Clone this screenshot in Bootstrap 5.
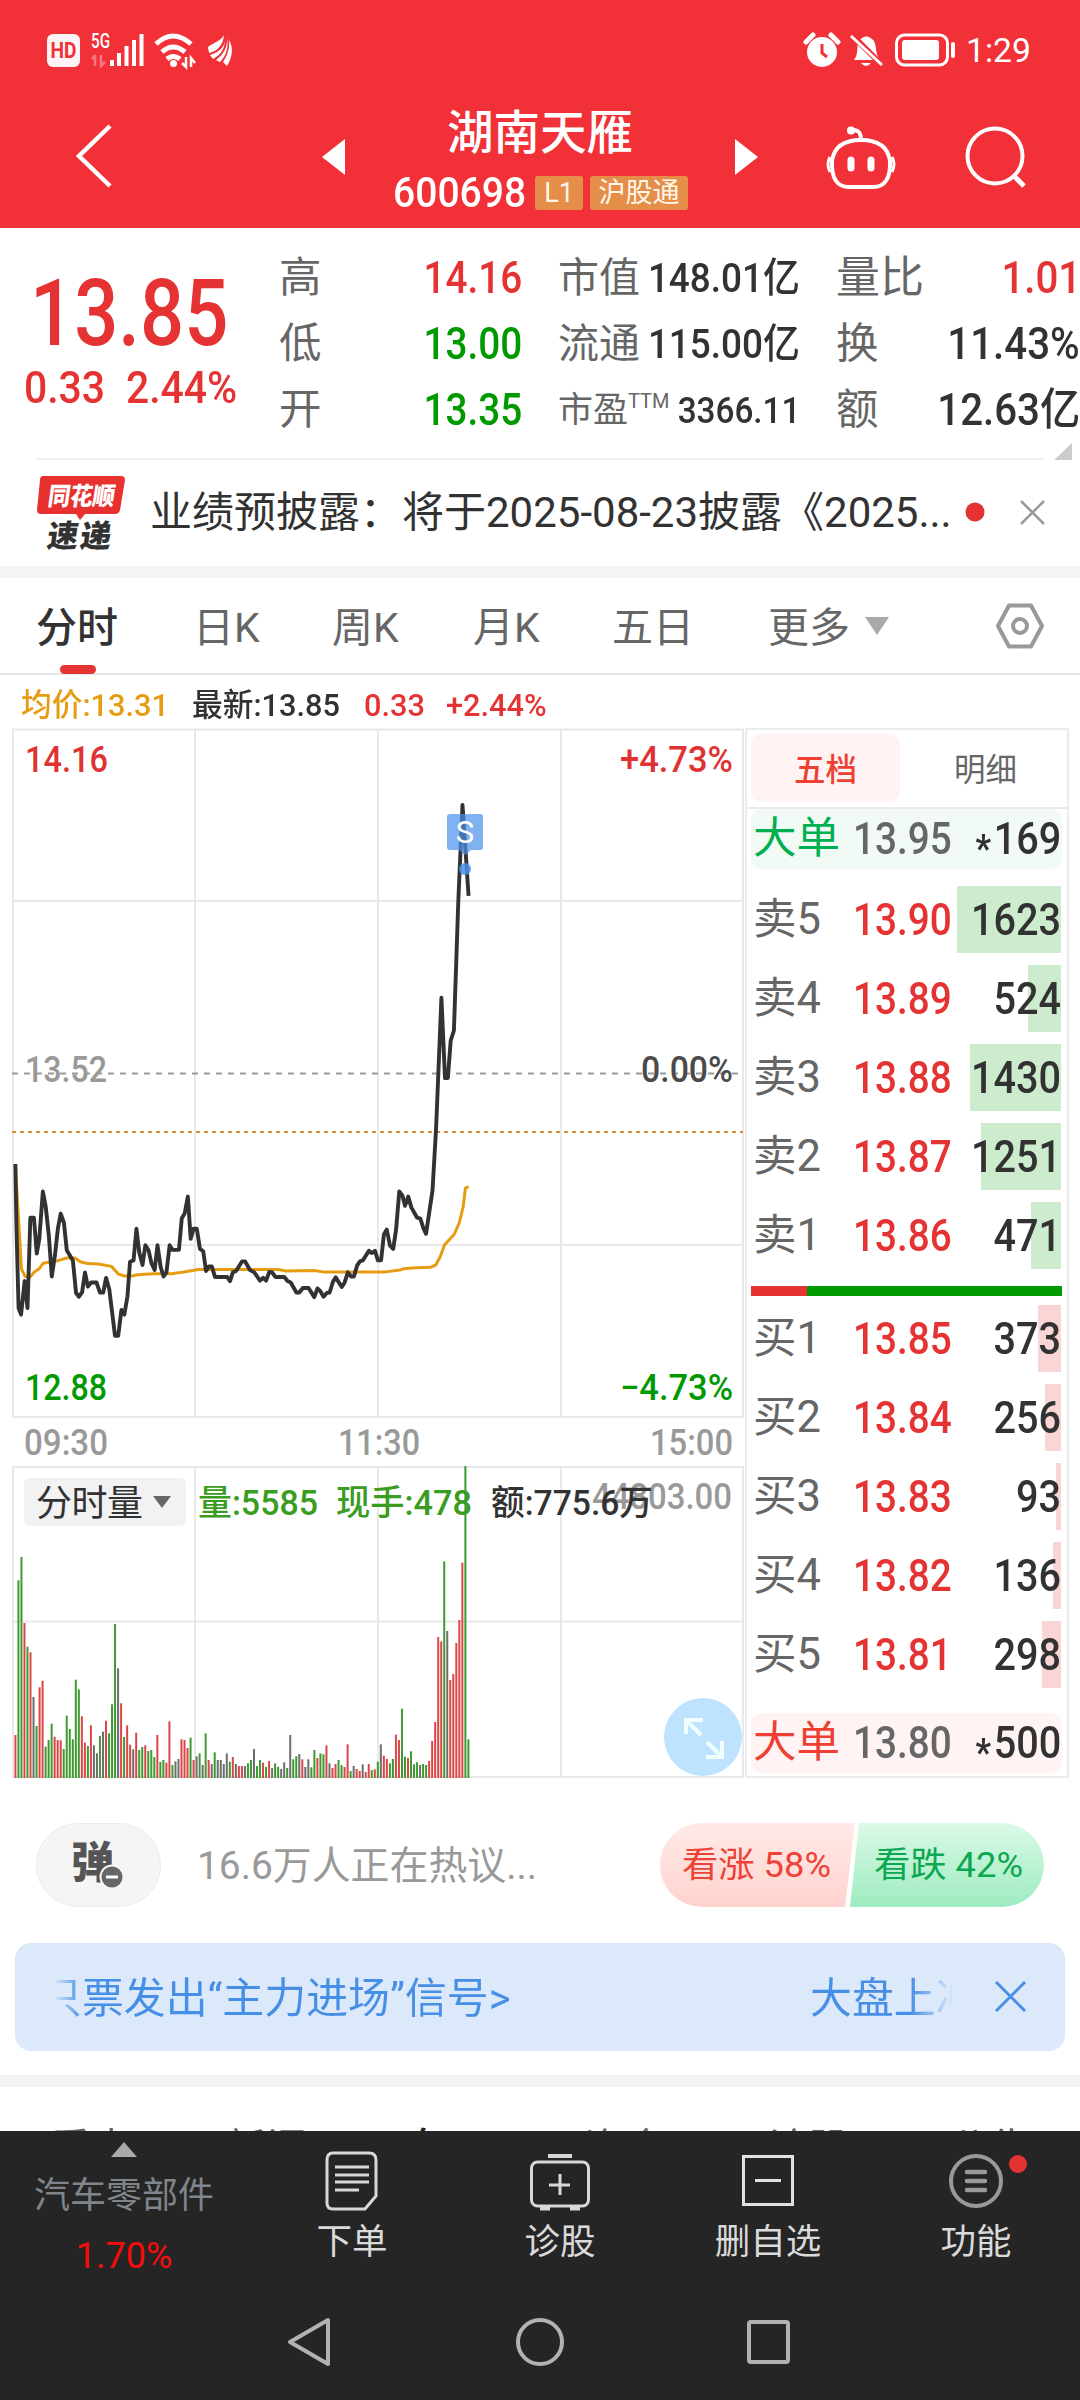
<!DOCTYPE html>
<html lang="zh-CN">
<head>
<meta charset="utf-8">
<meta name="viewport" content="width=device-width, initial-scale=1">
<title>湖南天雁 600698</title>
<link href="https://cdn.jsdelivr.net/npm/bootstrap@5.3.0/dist/css/bootstrap.min.css" rel="stylesheet">
<style>
:root{--up:#e53232;--down:#090;--ink:#323232;--sub:#666;--line:#ebebeb}
html,body{width:1080px;height:2400px;overflow:hidden}
body{font-family:Roboto,"Noto Sans CJK SC",sans-serif;background:#fff;color:var(--ink);font-size:41px;line-height:1}
svg{display:block;flex:none}
svg text{font-family:Roboto,"Noto Sans CJK SC",sans-serif;font-weight:500}
.c-up{color:var(--up)}.c-down{color:var(--down)}.c-sub{color:var(--sub)}
.fw-5{font-weight:500}
.numx{display:inline-block;white-space:nowrap;font-weight:500;transform:scaleX(.9);transform-origin:left}
.numr{transform-origin:right}
.topbar{background:#f13037;height:228px;color:#fff}
.statusrow{height:100px;padding:0 49px 0 47px}
.titlegrid{display:grid;grid-template-columns:322px 23px 390px 23px 68px 70px 68px 110px;height:112px;align-items:center}
.stockname{font-size:46.5px;line-height:58px;font-weight:500;margin:4px 0 10px}
.code{font-size:42px;width:130px;transform:scaleX(.93)}
.tagx{background:#e48e49;color:#fff7e8;font-size:27px;height:34px;line-height:34px;border-radius:3px;text-align:center}
.quote{height:230px;display:grid;grid-template-columns:281px 279px 278px 242px}
.bigprice{font-size:92px;height:91px;line-height:82px;transform:scaleX(.845)}
.chg{font-size:43.5px;height:50px;line-height:50px;transform:scaleX(.94)}
.qcell{height:66px;display:flex;justify-content:space-between;align-items:center;white-space:nowrap}
.qcell .lab{color:var(--sub);font-size:42.5px;margin-left:-2px}
.qcell .numx{font-size:44px;transform:scaleX(.88)}
.m .lab{font-size:41px}.m .numx{font-size:41px;margin-left:-20px;transform:scaleX(.9)}
.q4 .numx{transform:scaleX(.915)}
.corner{border-style:solid;border-width:0 0 17px 18px;border-color:transparent transparent #ccc}
.rule{height:2px;background:#eee;margin:0 36px}
.news{height:106px;padding-left:37px}
.news .txt{width:801px;font-size:42px;white-space:nowrap;margin-left:-1px}
.flag{fill:#e8302f}
.band{height:12px;background:#f4f4f4}
.ktabs{height:97px;border-bottom:2px solid #e6e6e6;display:grid;grid-template-columns:36px 157px 139px 141px 139px 156px 97px 131px 48px;color:var(--sub);white-space:nowrap;align-items:center}
.ktabs>span{padding-top:5px}
.ktabs .on{color:var(--ink);font-weight:500}
.ktabs .on::after{content:"";position:absolute;left:60px;top:665px;width:36px;height:9px;border-radius:5px;background:var(--up)}
.legend2{height:53px;padding-left:21px;font-size:32px;line-height:60px}
.legend2 .slot{white-space:nowrap;display:block}
.legend2 .numx{transform:scaleX(.96)}
.market{height:1051px}
.chartcol{width:745px}
.book{width:324px;border:2px solid var(--line);height:1050px;padding:0 5px 0 4px}
.btabs{height:79px;font-size:31.5px;color:var(--sub);border-bottom:2px solid var(--line);margin:0 -5px 0 -4px;padding:4px 0 5px 4px}
.btabs div{line-height:73px;text-align:center}
.btabs .on{background:#fff4f3;color:#ee4033;border-radius:10px;width:149px;font-weight:500}
.lv{height:67px;margin-bottom:12px;display:grid;grid-template-columns:102px 96px 112px;align-items:center}
.lv>*{grid-row:1}
.lv .fill{grid-column:1/-1;justify-self:end;height:67px}
.lv .lab{grid-column:1;color:var(--sub);padding-left:2px;font-size:43.5px;white-space:nowrap}
.lv .numx{font-size:44px;grid-column:2;color:var(--up);line-height:60px;transform:scaleX(.88)}
.lv .numr{grid-column:3;color:var(--ink);justify-self:end;transform:scaleX(.9)}
.sell .fill{background:#cdebcd}.buy .fill{background:#fad5d5}
.bigo{height:60px;border-radius:10px;margin:0 0 17px}
.bigo .numx{color:var(--sub)}.bigo .numr{color:var(--ink)}
.star{font-size:38px;font-weight:700;line-height:1;vertical-align:-8px;margin-right:3px}
.split{height:10px;margin:17px 0 9px}
.talk{height:164px;padding:8px 36px 0}
.danmu{width:125px;height:84px;border-radius:42px;background:#f5f5f5;border:1px solid #ececec}
.hot{font-size:38.9px;color:#999;margin-left:36px;width:463px;padding-top:3px}
.signal{height:108px;margin:0 15px;border-radius:16px;background:#dbe9fb;color:#478fe6;padding-left:25px}
.marq{width:914px;height:60px;line-height:64px;font-size:41.9px;white-space:nowrap;overflow:hidden;-webkit-mask-image:linear-gradient(90deg,transparent 14px,#000 42px,#000 870px,transparent 914px)}
.marq span{flex:none}
.subtabs{height:44px;overflow:hidden;display:grid;grid-template-columns:50px 175px 178px 181px 183px 182px 131px;line-height:125px;font-size:41px;white-space:nowrap}
.bottom{background:#252525;height:269px;color:#dadada}
.actions{display:grid;grid-template-columns:248px 208px 208px 208px 208px;height:167px;font-size:35.5px;text-align:center}
.actions .cell svg{margin:17px auto 5px}
.actions .cell{line-height:46px}
.android{height:88px}
</style>
</head>
<body>
<header class="topbar">
  <div class="statusrow d-flex justify-content-between align-items-center">
    <svg width="190" height="100" viewBox="47 0 190 100" fill="#fff">
      <rect x="47" y="34" width="33" height="33" rx="6" opacity=".95"/>
      <text x="50.500" y="58" font-size="22" fill="#f13037" textLength="26" lengthAdjust="spacingAndGlyphs" style="font-weight:700">HD</text>
      <text x="91" y="48" font-size="20" textLength="19" lengthAdjust="spacingAndGlyphs">5G</text>
      <path d="M95 55v11M92 59l3-4M101 55v11l4-4" stroke="#fff" stroke-width="2.500" fill="none" opacity=".35"/>
      <path d="M110 60h4v6h-4zM117 53h4v13h-4zM124.500 46h4v20h-4zM132 40h4v26h-4zM139.500 34h4v32h-4z"/>
      <path d="M156 44q17-16 35 0M162 52q11-10 23 0M167 59q6-5 13 0" fill="none" stroke="#fff" stroke-width="5"/>
      <circle cx="173.500" cy="63.500" r="3.500"/>
      <path d="M186 57v10l-4-4M191 67v-9l4 5" fill="none" stroke="#fff" stroke-width="2.500"/>
      <path d="M224 35c-2 5-11 8-16 12l1 6c9-2 14-8 15-18zM225 37c1 9-5 15-15 18l3 4c8-4 13-12 12-22zM227 38c1 9-4 17-11 22l4 2c6-6 9-15 7-24zM229 40c1 9-2 16-6 22l4 4c5-8 7-18 2-26z"/>
    </svg>
    <svg width="228" height="100" viewBox="804 0 228 100" fill="#fff">
      <circle cx="823" cy="52" r="15"/><path d="M807 42l7-7M839 42l-7-7" stroke="#fff" stroke-width="5" stroke-linecap="round"/>
      <path d="M823 44v9l5 4" stroke="#f13037" stroke-width="3" fill="none"/>
      <path d="M855 60c5-6 2-14 5-19q7-9 15 0c3 6 1 13 6 19zM862 63h10q-5 6-10 0z"/>
      <path d="M854 36l30 30" stroke="#f13037" stroke-width="6"/><path d="M852 36l31 29" stroke="#fff" stroke-width="3"/>
      <rect x="897.500" y="35" width="51" height="30" rx="8" fill="none" stroke="#fff" stroke-width="3"/><rect x="903" y="40" width="37" height="20" rx="3"/><rect x="952" y="42" width="4" height="16" rx="2"/>
      <text x="967" y="62" font-size="34" textLength="65" lengthAdjust="spacingAndGlyphs" style="font-weight:400">1:29</text>
    </svg>
  </div>
  <div class="titlegrid">
    <svg width="130" height="110" viewBox="0 0 130 110"><path d="M110 24L79 54L110 84" fill="none" stroke="#fff" stroke-width="4.500"/></svg>
    <svg width="23" height="36"><path d="M23 0v36L0 18z" fill="#fff"/></svg>
    <div>
      <div class="stockname text-center">湖南天雁</div>
      <div class="d-flex align-items-center" style="padding-left:48px">
        <span class="numx code me-2">600698</span>
        <span class="tagx ms-1" style="width:48px">L1</span><span class="tagx" style="width:98px;margin-left:7px">沪股通</span>
      </div>
    </div>
    <svg width="23" height="36"><path d="M0 0v36L23 18z" fill="#fff"/></svg>
    <span></span>
    <svg width="70" height="66" viewBox="0 0 70 66" fill="none" stroke="#fff" stroke-width="4">
      <path d="M35 16c0-7-2-10-8-10" /><circle cx="25" cy="6.500" r="4" fill="#fff" stroke="none"/>
      <path d="M6 37c2-14 11-21 29-21s27 7 29 21q1 26-17 26H23Q5 63 6 37z"/>
      <path d="M4 33q-4 7 0 15M66 33q4 7 0 15" stroke-width="3"/>
      <path d="M25 36v8M45 36v8" stroke-width="7" stroke-linecap="round"/>
    </svg>
    <span></span>
    <svg width="66" height="66" viewBox="0 0 66 66" fill="none" stroke="#fff" stroke-width="4"><circle cx="31" cy="32" r="27.500"/><path d="M50 52l10 10" stroke-width="5"/></svg>
  </div>
</header>

<section class="quote">
  <div style="padding-top:45px">
    <div class="numx bigprice c-up" style="margin-left:30px">13.85</div>
    <div class="d-flex c-up">
      <span class="numx chg" style="margin-left:24px;width:102px">0.33</span><span class="numx chg">2.44%</span>
    </div>
  </div>
  <div style="padding:17px 38px 0 0">
    <div class="qcell"><span class="lab">高</span><span class="numx numr c-up">14.16</span></div>
    <div class="qcell"><span class="lab">低</span><span class="numx numr c-down">13.00</span></div>
    <div class="qcell"><span class="lab">开</span><span class="numx numr c-down">13.35</span></div>
  </div>
  <div class="m" style="padding:17px 38px 0 0">
    <div class="qcell"><span class="lab">市值</span><span class="numx numr">148.01亿</span></div>
    <div class="qcell"><span class="lab">流通</span><span class="numx numr">115.00亿</span></div>
    <div class="qcell"><span class="lab" style="font-size:35px">市盈<sup style="font-size:20px;top:-.7em">TTM</sup></span><span class="numx numr" style="font-size:37px">3366.11</span></div>
  </div>
  <div class="q4" style="padding-top:17px">
    <div class="qcell"><span class="lab" style="font-size:44px">量比</span><span class="numx numr c-up" style="margin-right:-1px">1.01</span></div>
    <div class="qcell"><span class="lab">换</span><span class="numx numr">11.43%</span></div>
    <div class="qcell"><span class="lab">额</span><span class="numx numr">12.63亿</span></div>
    <div class="d-flex justify-content-end pe-2"><div class="corner"></div></div>
  </div>
</section>
<div class="rule"></div>
<section class="news d-flex align-items-center">
  <svg width="88" height="74" viewBox="0 0 88 74" style="margin-right:26px">
    <path class="flag" d="M6 0h78q4 0 4 4l-5 30q-1 4-5 4H48l-5 6-4-6H4q-4 0-4-4L3 4q0-4 3-4z"/>
    <g transform="skewX(-8)"><text x="14" y="29" font-size="25" fill="#fff" textLength="67" lengthAdjust="spacingAndGlyphs" style="font-weight:900">同花顺</text>
    <text x="19" y="71" font-size="31" fill="#323232" textLength="64" style="font-weight:900">速递</text></g>
  </svg>
  <div class="txt">业绩预披露：将于2025-08-23披露《2025...</div>
  <svg width="110" height="40" viewBox="0 0 110 40"><circle cx="24" cy="19" r="9.500" fill="#e53232"/><path d="M70 8l23 23M93 8L70 31" stroke="#999" stroke-width="2.500"/></svg>
</section>
<div class="band"></div>
<nav class="ktabs">
  <span></span><span class="on">分时</span><span>日K</span><span>周K</span><span>月K</span><span>五日</span><span>更多</span>
  <svg width="24" height="18"><path d="M0 0h24L12 18z" fill="#aaa"/></svg>
  <svg width="48" height="48" viewBox="0 0 48 48" fill="none" stroke="#999" stroke-width="4"><path d="M13 3.500h22L46 24 35 44.500H13L2 24z" stroke-linejoin="round"/><circle cx="24" cy="24" r="7"/></svg>
</nav>
<div class="legend2 d-flex">
  <span class="slot" style="color:#e69c10;width:171px"><span class="numx">均价:13.31</span></span><span class="slot" style="width:172px"><span class="numx">最新:13.85</span></span><span class="slot c-up" style="width:82px"><span class="numx">0.33</span></span><span class="slot c-up"><span class="numx">+2.44%</span></span>
</div>

<section class="market d-flex">
  <div class="chartcol">
    <svg width="745" height="1051" viewBox="0 728 745 1051">
      <g stroke="#e9e9e9" stroke-width="2" fill="none">
        <path d="M13 729.500H743V1417H13zM13 901H743M13 1245H743M195 729V1417M378 729V1417M561 729V1417"/>
        <path d="M13 1467H743V1777H13zM13 1621.500H743M195 1467V1777M378 1467V1777M561 1467V1777"/>
      </g>
      <path d="M12 1073.500H741" stroke="#999" stroke-width="2" stroke-dasharray="6 6"/>
      <path d="M12 1132H743" stroke="#dc8c3c" stroke-width="2" stroke-dasharray="4 4"/>
      <g transform="translate(0 720) scale(.35714 .45914)" fill="none" stroke-linejoin="round">
        <polyline vector-effect="non-scaling-stroke" stroke="#e69c10" stroke-width="3" points="43,967 60,1195 70,1212 85,1213 95,1203 110,1195 121,1183 160,1178 185,1172 210,1172 225,1180 245,1184 275,1185 312,1190 332,1207 348,1211 370,1211 385,1208 430,1206 480,1206 510,1203 555,1197 640,1197 780,1197 800,1200 880,1199 905,1202 1080,1202 1120,1198 1130,1195 1165,1193 1205,1192 1220,1187 1232,1170 1245,1143 1272,1120 1286,1095 1297,1060 1303,1020 1312,1016"/>
        <polyline vector-effect="non-scaling-stroke" stroke="#323232" stroke-width="3.900" points="43,967 46,1100 52,1281 59,1295 69,1222 77,1281 85,1084 95,1084 103,1162 110,1130 120,1027 128,1060 137,1125 145,1212 154,1165 162,1108 170,1075 179,1095 187,1155 204,1177 213,1248 221,1256 230,1246 238,1203 246,1234 255,1225 270,1225 280,1247 289,1247 297,1215 306,1240 322,1341 331,1341 340,1285 348,1295 357,1255 364,1180 374,1177 382,1108 390,1160 399,1187 407,1144 416,1155 424,1183 433,1198 441,1144 450,1192 458,1212 466,1203 475,1144 483,1154 501,1154 509,1085 517,1075 526,1038 534,1130 542,1108 551,1108 560,1152 569,1157 577,1200 585,1190 593,1190 602,1213 636,1213 644,1222 652,1203 661,1200 678,1179 686,1179 700,1198 712,1203 728,1221 737,1215 745,1221 754,1202 762,1203 771,1213 796,1213 805,1222 814,1225 830,1247 838,1247 848,1237 864,1237 880,1257 889,1238 897,1244 906,1256 915,1248 923,1247 932,1224 940,1214 957,1235 965,1225 974,1203 983,1212 991,1212 1000,1188 1008,1179 1016,1177 1033,1156 1041,1161 1050,1156 1058,1177 1067,1177 1075,1120 1083,1110 1092,1145 1101,1152 1109,1110 1118,1027 1127,1036 1134,1058 1143,1038 1152,1062 1168,1084 1177,1086 1186,1108 1193,1119 1211,1025 1221,890 1236,605 1246,780 1254,780 1262,698 1271,676 1283,400 1295,185 1312,383"/>
      </g>
      <g fill="#4a90ea"><path opacity=".7" d="M450 814h30q3 0 3 3v30q0 3-3 3h-9l-6 5-6-5h-9q-3 0-3-3v-30q0-3 3-3z"/><circle cx="465" cy="869" r="6" opacity=".85"/></g>
      <text x="465" y="843" text-anchor="middle" font-size="31" fill="#fff" style="font-weight:400">S</text>
      <g font-size="36">
        <text x="25" y="772" fill="#e03232" textLength="83" lengthAdjust="spacingAndGlyphs">14.16</text>
        <text x="25" y="1082" fill="#999" textLength="82" lengthAdjust="spacingAndGlyphs">13.52</text>
        <text x="25" y="1400" fill="#090" textLength="82" lengthAdjust="spacingAndGlyphs">12.88</text>
        <text x="620" y="772" fill="#e03232" textLength="113" lengthAdjust="spacingAndGlyphs">+4.73%</text>
        <text x="641" y="1082" fill="#4a4a4a" textLength="92" lengthAdjust="spacingAndGlyphs">0.00%</text>
        <text x="620" y="1400" fill="#090" textLength="113" lengthAdjust="spacingAndGlyphs">−4.73%</text>
        <g fill="#999"><text x="24" y="1455" textLength="84" lengthAdjust="spacingAndGlyphs">09:30</text>
        <text x="338" y="1455" textLength="82" lengthAdjust="spacingAndGlyphs">11:30</text>
        <text x="650" y="1455" textLength="83" lengthAdjust="spacingAndGlyphs">15:00</text>
        <text x="592" y="1509" textLength="140" lengthAdjust="spacingAndGlyphs">44803.00</text></g>
      </g>
      <g id="vol"></g>
      <rect x="24" y="1478" width="162" height="48" rx="6" fill="#f2f2f2"/>
      <g font-size="35">
        <text x="36" y="1516" font-size="36" fill="#323232" textLength="107" style="font-weight:400">分时量</text>
        <path d="M153 1496h18l-9 12z" fill="#666"/>
        <g fill="#3a9c20"><text x="198" y="1515" textLength="120" lengthAdjust="spacingAndGlyphs">量:5585</text>
        <text x="336" y="1515" textLength="136" lengthAdjust="spacingAndGlyphs">现手:478</text></g>
        <text x="491" y="1515" fill="#323232" textLength="162" lengthAdjust="spacingAndGlyphs">额:775.6万</text>
      </g>
      <circle cx="703" cy="1737" r="39" fill="#bde3ff"/>
      <path d="M701 1735l-15-15M686 1734v-14h17M707 1742l15 15M722 1741v16h-16" fill="none" stroke="#f1fffc" stroke-width="4"/>
    </svg>
  </div>
  <div class="book">
    <div class="btabs d-flex"><div class="on">五档</div><div class="flex-fill ps-1">明细</div></div>
    <div class="lv bigo" style="background:#f2faf6"><span class="lab" style="color:#00b050">大单</span><span class="numx">13.95</span><span class="numx numr"><span class="star">*</span>169</span></div>
    <div class="sell" id="asks"></div>
    <div class="split d-flex"><div style="width:56px;background:#e53232"></div><div class="flex-fill" style="background:#090"></div></div>
    <div class="buy" id="bids"></div>
    <div class="lv bigo" style="background:#fff4f3;margin-top:25px"><span class="lab" style="color:#ee4033">大单</span><span class="numx">13.80</span><span class="numx numr"><span class="star">*</span>500</span></div>
  </div>
</section>

<section class="talk d-flex align-items-center">
  <div class="danmu d-flex align-items-center justify-content-center">
    <svg width="56" height="54" viewBox="0 0 56 54"><text x="0" y="40" font-size="43" fill="#555" style="font-weight:900">弹</text><circle cx="41" cy="39" r="12.500" fill="#f5f5f5"/><circle cx="41" cy="39" r="10.500" fill="#666"/><path d="M35 39h12" stroke="#fff" stroke-width="3"/></svg>
  </div>
  <div class="hot">16.6万人正在热议...</div>
  <svg width="384" height="84" viewBox="0 0 384 84">
    <defs><linearGradient id="r" x2="0" y2="1"><stop stop-color="#ffeae8"/><stop offset="1" stop-color="#ffd3ce"/></linearGradient>
    <linearGradient id="g" x2="0" y2="1"><stop stop-color="#dbfae8"/><stop offset="1" stop-color="#9debbf"/></linearGradient></defs>
    <path d="M42 0H195L185 84H42A42 42 0 0 1 42 0z" fill="url(#r)"/><path d="M199 0H342A42 42 0 0 1 342 84H190z" fill="url(#g)"/>
    <g font-size="35"><text x="22" y="54" fill="#ee4236" textLength="149" lengthAdjust="spacingAndGlyphs" style="font-weight:400">看涨 58%</text><text x="214" y="54" fill="#0aa850" textLength="149" lengthAdjust="spacingAndGlyphs" style="font-weight:400">看跌 42%</text></g>
  </svg>
</section>
<section class="signal d-flex align-items-center">
  <div class="marq d-flex"><span style="width:770px">只票发出“主力进场”信号&gt;</span><span>大盘上冲</span></div>
  <svg width="32" height="32" viewBox="0 0 32 32" style="margin-left:41px"><path d="M1 1l29 29M30 1L1 30" stroke="#478fe6" stroke-width="3"/></svg>
</section>
<div class="band" style="margin-top:24px"></div>
<nav class="subtabs c-sub"><span></span><span>看点</span><span>新闻</span><span class="fw-5" style="color:#222">盘口</span><span>资金</span><span>诊股</span><span>公告</span></nav>

<footer class="bottom">
  <div class="actions">
    <div>
      <svg class="mx-auto" width="26" height="15" style="margin-top:11px"><path d="M13 0l13 15H0z" fill="#aaa"/></svg>
      <div style="color:#7f858b;line-height:46px;margin-top:16px;font-size:36px">汽车零部件</div>
      <div style="color:#f60c0c;line-height:44px;margin-top:15px;font-size:36px">1.70%</div>
    </div>
    <div class="cell"><svg width="60" height="66" viewBox="0 0 60 66" fill="none" stroke="#d8d8d8" stroke-width="3"><path d="M11 5h36q7 0 7 7v36L43 61H11q-6 0-6-6V12q0-7 6-7z"/><path d="M13 19h34M13 27h34M13 34h34M13 42h24"/></svg>下单</div>
    <div class="cell"><svg width="64" height="66" viewBox="0 0 64 66" fill="none" stroke="#d8d8d8" stroke-width="3"><path d="M20 8h24" stroke-width="4"/><rect x="3.500" y="14" width="57" height="44" rx="6"/><path d="M32 26v21M21 37h21"/><path d="M12 60h10M42 60h10" stroke-width="5"/></svg>诊股</div>
    <div class="cell"><svg width="52" height="66" viewBox="0 0 52 66" fill="none" stroke="#e2e2e2" stroke-width="3"><rect x="1.500" y="8.500" width="49" height="48"/><path d="M13 32.500h26"/></svg>删自选</div>
    <div class="cell"><svg width="104" height="66" viewBox="0 0 104 66" fill="none" stroke="#999" stroke-width="4"><circle cx="52" cy="33" r="25"/><path d="M43 24h18M43 33h18M43 42h18" stroke-width="4.500" stroke-linecap="round"/><circle cx="94" cy="16" r="9" fill="#e53232" stroke="none"/></svg>功能</div>
  </div>
  <svg class="android" width="1080" height="88" viewBox="0 0 1080 88" fill="none" stroke="#b2b2b2" stroke-width="4" stroke-linejoin="round"><path d="M328 22v44L290 44z"/><circle cx="540" cy="44" r="22"/><rect x="749" y="24" width="39" height="40" rx="2"/></svg>
</footer>
<script src="https://cdn.jsdelivr.net/npm/bootstrap@5.3.0/dist/js/bootstrap.bundle.min.js"></script>
<script>
// order book levels: label, price, lots, depth bar width
const row = ([l, p, v, w]) => `<div class="lv"><i class="fill" style="width:${w}px"></i><span class="lab">${l}</span><span class="numx">${p}</span><span class="numx numr">${v}</span></div>`;
document.getElementById('asks').innerHTML = [['卖5','13.90',1623,104],['卖4','13.89',524,33],['卖3','13.88',1430,91],['卖2','13.87',1251,80],['卖1','13.86',471,30]].map(row).join('');
document.getElementById('bids').innerHTML = [['买1','13.85',373,23],['买2','13.84',256,16],['买3','13.83',93,5],['买4','13.82',136,8],['买5','13.81',298,19]].map(row).join('');
// minute volume: direction (r up, g down, k flat) and height in thirds of a pixel below the 1134 base line
const vol = 'r1005 g541 g471 r669 g740 r757 k891 g978 r862 r842 g1040 g1020 g971 r1010 r1020 r1021 g1047 g947 g987 g1018 g839 g868 r949 r1028 g1038 r976 k1036 k1060 g1008 k995 r962 g1000 g913 g672 k805 r910 g1011 r976 r1034 k1048 r998 g1050 g1041 r1036 g1053 g1050 g1071 r1005 g1086 g1080 r1088 r964 g1095 k1084 k1077 r1018 r1020 r1044 g1013 r1080 k1069 g1060 k1095 g1000 r1080 k1092 g1057 k1080 k1080 k1092 k1060 g1085 r1071 k1092 r1098 r1098 k1098 g1090 g1080 k1047 g1098 g1080 r1088 g1101 r1083 k1104 g1090 g1100 k1107 k1087 g1104 k1005 g1078 g1069 k1062 r1078 k1101 k1078 g1102 g1050 r1074 g1060 g1063 r1036 k1090 r1104 r1092 g1080 g1095 r1101 r1033 g1113 k1098 r1107 r1113 k1093 r1116 r1092 g1110 r1108 g1085 k1033 r1067 r1077 g1090 g1077 r1004 r1020 g926 g1070 r1074 g1054 g1093 g1087 k1095 g1092 g1095 r1083 r1023 r966 r711 r724 g484 k693 r840 r822 r729 r660 r488 g198 g1018'.split(' ');
const col = {r:'#dc4646', g:'#3e9a30', k:'#6e6e6e'};
document.getElementById('vol').innerHTML = vol.map((s, i) => {
  const h = (1134 - s.slice(1)) / 3;
  return `<rect x="${(14.4 + i * 3.02).toFixed(2)}" y="${(1778 - h).toFixed(1)}" width="2" height="${h.toFixed(1)}" fill="${col[s[0]]}"/>`;
}).join('');
</script>
</body>
</html>
